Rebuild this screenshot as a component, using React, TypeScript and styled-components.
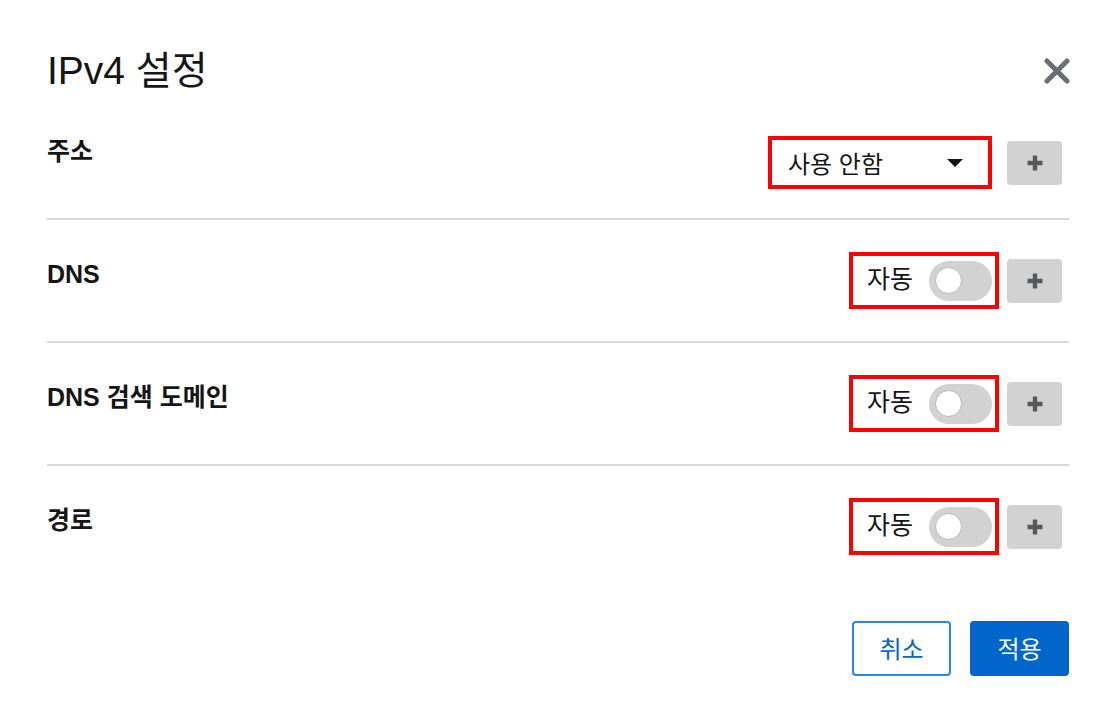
import React from "react";
import styled, { createGlobalStyle } from "styled-components";

const GlobalStyle = createGlobalStyle`
  html, body {
    margin: 0;
    padding: 0;
    background: #ffffff;
  }
  body {
    font-family: "Liberation Sans", "Noto Sans CJK KR", sans-serif;
    color: #151515;
  }
`;

const Modal = styled.div`
  width: 1116px;
  height: 727px;
  box-sizing: border-box;
  padding: 48px 47px 0 47px;
  background: #fff;
`;

const Header = styled.header`
  display: flex;
  align-items: center;
  justify-content: space-between;
  margin-bottom: 3px;
`;

const Title = styled.h1`
  margin: 0;
  font-size: 39px;
  line-height: 46px;
  font-weight: 400;
  color: #151515;
`;

const CloseButton = styled.button`
  display: flex;
  align-items: center;
  justify-content: center;
  width: 28px;
  height: 28px;
  margin-right: -2px;
  padding: 0;
  border: none;
  background: transparent;
  cursor: pointer;
`;

const Row = styled.div<{ $last?: boolean }>`
  display: flex;
  align-items: center;
  justify-content: space-between;
  height: 121px;
  padding-right: 7px;
  border-bottom: ${(p) => (p.$last ? "none" : "2px solid #d8d8d8")};
`;

const Label = styled.span`
  font-size: 25px;
  font-weight: 700;
  line-height: 30px;
  margin-bottom: 14px;
`;

const Controls = styled.div<{ $drop?: number }>`
  display: flex;
  align-items: center;
  margin-top: ${(p) => p.$drop ?? 0}px;
`;

const Highlight = styled.div<{ $space: number; $pad: string }>`
  display: flex;
  align-items: center;
  box-sizing: border-box;
  border: 4px solid #ff0000;
  padding: ${(p) => p.$pad};
  margin-right: ${(p) => p.$space}px;
`;

const Select = styled.div`
  display: flex;
  align-items: center;
  justify-content: space-between;
  width: 216px;
  height: 45px;
  box-sizing: border-box;
  padding: 0 4px 0 16px;
  font-size: 24px;
  color: #151515;
`;

const Caret = styled.span`
  width: 0;
  height: 0;
  border-left: 8px solid transparent;
  border-right: 8px solid transparent;
  border-top: 8px solid #151515;
  margin-right: 21px;
`;

const SwitchText = styled.span`
  font-size: 25px;
  color: #151515;
  margin-right: 16px;
  margin-bottom: 7px;
`;

const Track = styled.span<{ $on?: boolean }>`
  display: flex;
  align-items: center;
  width: 63px;
  height: 40px;
  border-radius: 20px;
  box-sizing: border-box;
  padding-left: 6px;
  background: ${(p) => (p.$on ? "#0066cc" : "#d2d2d2")};
`;

const Knob = styled.span`
  width: 27px;
  height: 27px;
  border-radius: 50%;
  background: #fff;
  border: 1px solid #b8b8b8;
  box-sizing: border-box;
`;

const PlusButton = styled.button`
  display: flex;
  align-items: center;
  justify-content: center;
  width: 55px;
  height: 44px;
  padding: 0;
  border: none;
  border-radius: 4px;
  background: #d2d2d2;
  cursor: pointer;
`;

const Footer = styled.footer`
  display: flex;
  justify-content: flex-end;
  gap: 19px;
  margin-top: 34px;
`;

const ActionButton = styled.button<{ $primary?: boolean }>`
  width: 99px;
  height: 55px;
  box-sizing: border-box;
  border-radius: 4px;
  font-family: "Liberation Sans", "Noto Sans CJK KR", sans-serif;
  font-size: 24px;
  padding-bottom: 3px;
  cursor: pointer;
  border: 2px solid ${(p) => (p.$primary ? "#0066cc" : "#2b86e0")};
  background: ${(p) => (p.$primary ? "#0066cc" : "#fff")};
  color: ${(p) => (p.$primary ? "#fff" : "#0066cc")};
`;

const CloseIcon = () => (
  <svg width="26" height="26" viewBox="0 0 26 26">
    <path
      d="M3 3 L23 23 M23 3 L3 23"
      stroke="#6a6e73"
      strokeWidth="5"
      strokeLinecap="round"
    />
  </svg>
);

const PlusIcon = () => (
  <svg width="18" height="18" viewBox="0 0 18 18">
    <path d="M9 1.5 V16.5 M1.5 9 H16.5" stroke="#55595d" strokeWidth="4.4" />
  </svg>
);

const AutoSwitch = () => (
  <Highlight $space={8} $pad="3px 3px 3px 14px">
    <SwitchText>자동</SwitchText>
    <Track>
      <Knob />
    </Track>
  </Highlight>
);

const rows = [
  { id: "dns", label: "DNS" },
  { id: "search", label: "DNS 검색 도메인" },
  { id: "routes", label: "경로" },
];

export default function App() {
  return (
    <>
      <GlobalStyle />
      <Modal>
        <Header>
          <Title>IPv4 설정</Title>
          <CloseButton aria-label="닫기">
            <CloseIcon />
          </CloseButton>
        </Header>

        <Row>
          <Label>주소</Label>
          <Controls $drop={10}>
            <Highlight $space={15} $pad="0">
              <Select>
                사용 안함
                <Caret />
              </Select>
            </Highlight>
            <PlusButton aria-label="추가">
              <PlusIcon />
            </PlusButton>
          </Controls>
        </Row>

        {rows.map((row, i) => (
          <Row key={row.id} $last={i === rows.length - 1}>
            <Label>{row.label}</Label>
            <Controls>
              <AutoSwitch />
              <PlusButton aria-label="추가">
                <PlusIcon />
              </PlusButton>
            </Controls>
          </Row>
        ))}

        <Footer>
          <ActionButton>취소</ActionButton>
          <ActionButton $primary>적용</ActionButton>
        </Footer>
      </Modal>
    </>
  );
}
